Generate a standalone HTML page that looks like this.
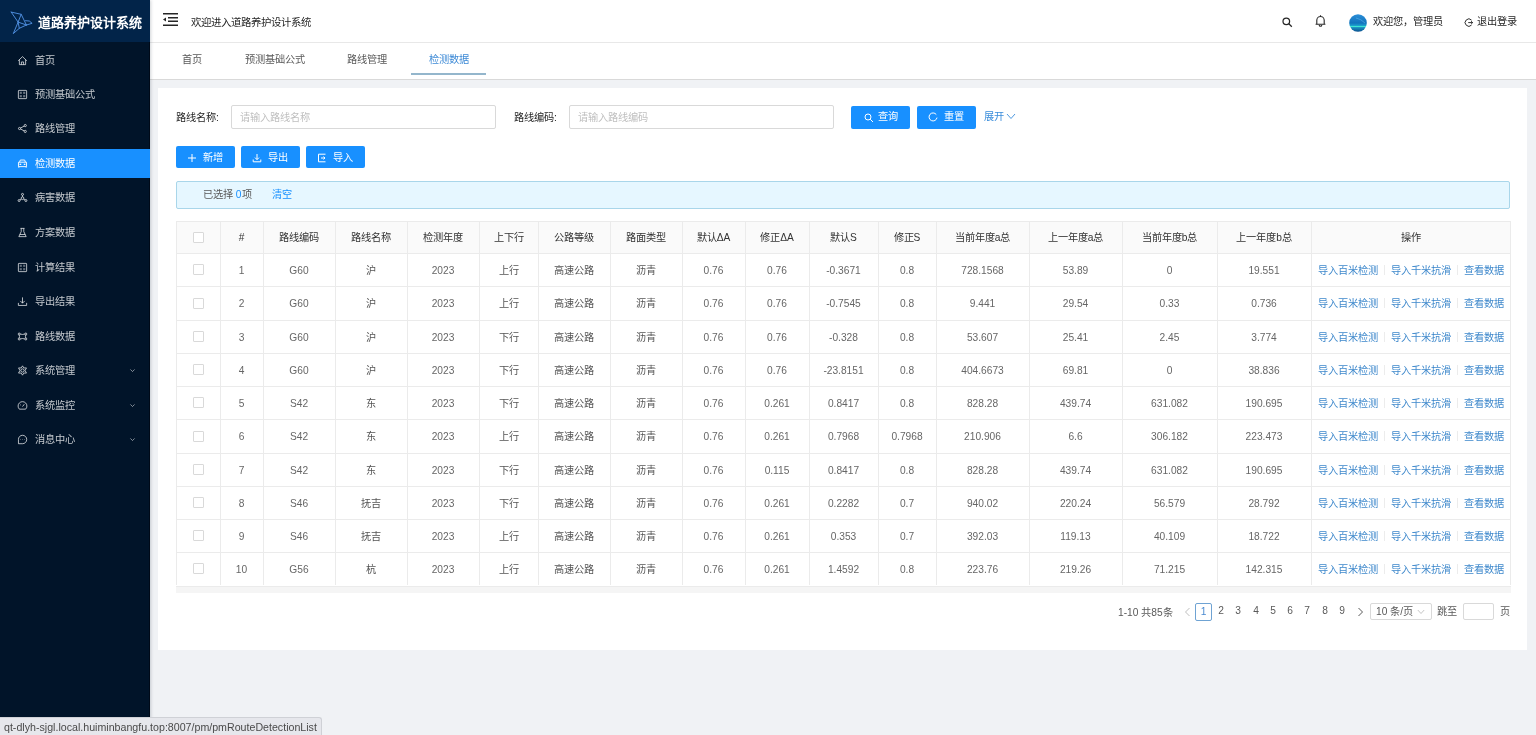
<!DOCTYPE html>
<html lang="zh-CN"><head><meta charset="utf-8">
<style>
*{box-sizing:border-box;margin:0;padding:0}
html,body{width:1536px;height:735px;overflow:hidden;will-change:transform;background:#f0f2f5;font-family:"Liberation Sans",sans-serif;font-size:10.2px;color:#595959}
.abs{position:absolute}
#side{position:absolute;left:0;top:0;width:150px;height:735px;background:#011429;box-shadow:1px 0 3px rgba(0,21,41,.18);border-right:1px solid #000a18;z-index:2}
#logo{position:absolute;left:0;top:0;width:150px;height:42px;background:#022449}
#logo .t{position:absolute;left:38px;top:12px;font-size:13px;font-weight:bold;color:#fff;line-height:22px;white-space:nowrap;letter-spacing:0}
.mi{position:absolute;left:0;width:150px;height:29px;line-height:29px;color:rgba(255,255,255,.76);font-size:10.2px}
.mi span{position:absolute;left:34.6px;top:0}
.mi.active{background:#1890ff;color:#fff}
.mic{position:absolute;left:17px;top:9px;fill:none;stroke:currentColor;stroke-width:1}
.chev{position:absolute;left:129px;top:11px;fill:none;stroke:currentColor;stroke-width:1.2;opacity:.8}
#hdr{position:absolute;left:150px;top:0;width:1386px;height:43px;background:#fff;border-bottom:1px solid #e8e8e8}
#tabs{position:absolute;left:150px;top:43px;width:1386px;height:37px;background:#fff;border-bottom:1px solid #d9d9d9}
.tab{position:absolute;top:1px;height:36px;line-height:32px;font-size:10.2px;color:#595959;white-space:nowrap}
#card{position:absolute;left:158px;top:88px;width:1369px;height:562px;background:#fff}
.lbl{position:absolute;color:#262626;font-size:10.2px;line-height:24px;padding-top:.5px;white-space:nowrap}
.inp{position:absolute;height:24px;border:1px solid #d9d9d9;border-radius:2px;background:#fff;color:#bfbfbf;line-height:22px;padding-top:1px;padding-left:8px;font-size:10.2px;white-space:nowrap}
.btn{position:absolute;background:#1890ff;color:#fff;border-radius:2px;font-size:10.2px;white-space:nowrap}
.btn svg{position:absolute;fill:none;stroke:#fff;stroke-width:1}
.btn span{position:absolute}
#alert{position:absolute;left:176px;top:181px;width:1334px;height:28px;background:#e6f7ff;border:1px solid #a9d6ea;border-radius:2px}
.thbg{position:absolute;background:#fafafa}
.hl{position:absolute;height:1px;background:#ebebeb}
.vl{position:absolute;width:1px;background:#ebebeb}
.sb{position:absolute;height:6px;background:#f5f5f5}
.cb{position:absolute;width:11px;height:11px;border:1px solid #d9d9d9;border-radius:1px;background:#fff}
.th{position:absolute;text-align:center;color:#333;padding-top:1px;font-size:10.2px;white-space:nowrap}
.td{position:absolute;text-align:center;color:#666;padding-top:1px;font-size:10.2px;white-space:nowrap}
.td.cj{color:#555}
.ops a{color:#3f89cc}
.ops i{display:inline-block;width:1px;height:10px;background:#ececec;margin:0 6px;vertical-align:-1px}
.pg{position:absolute;top:603px;height:17px;line-height:17px;font-size:10.2px;color:#595959;white-space:nowrap;text-align:center}
#status{position:absolute;z-index:5;left:0;top:717px;width:322px;height:18px;background:#e6e7ec;border:1px solid #cfd1d6;border-left:none;border-bottom:none;border-top-right-radius:3px;color:#4a4a4a;font-size:10.65px;line-height:18px;padding-left:4px;white-space:nowrap}
</style></head><body>
<div id="side">
  <div id="logo">
    <svg class="abs" style="left:10px;top:10px" width="24" height="25" viewBox="0 0 24 25" fill="none" stroke="#4f8fe0" stroke-width="0.95" stroke-linejoin="round" stroke-linecap="round">
      <path d="M1.2 2.1L11.2 4.3 16.4 15 M1.2 2.1L8.1 12.1 11.2 4.3 M8.1 12.1L16.4 15 M15.5 10.7L19.3 11 22.1 13.3 16.4 15 M8.1 12.1L3.3 23.6 9.3 18.3 16.4 15 M8.1 12.1L9.3 18.3"/>
    </svg>
    <div class="t">道路养护设计系统</div>
  </div>
  <div class="mi" style="top:45.5px"><svg class="mic" viewBox="0 0 12 12" width="11" height="11"><path d="M1.3 6.3L6 1.8 10.7 6.3M2.6 5.2V10.5H9.4V5.2M4.8 10.5V7.6H7.2V10.5" /></svg><span>首页</span></div>
<div class="mi" style="top:79.5px"><svg class="mic" viewBox="0 0 12 12" width="11" height="11"><rect x="1.5" y="1.5" width="9" height="9" rx=".6"/><rect x="3" y="3" width="2.3" height="2.3" fill="currentColor" stroke="none" opacity=".55"/><rect x="6.7" y="3" width="2.3" height="2.3" fill="currentColor" stroke="none" opacity=".55"/><rect x="3" y="6.7" width="2.3" height="2.3" fill="currentColor" stroke="none" opacity=".55"/><rect x="6.7" y="6.7" width="2.3" height="2.3" fill="currentColor" stroke="none" opacity=".55"/></svg><span>预测基础公式</span></div>
<div class="mi" style="top:113.5px"><svg class="mic" viewBox="0 0 12 12" width="11" height="11"><circle cx="9" cy="2.8" r="1.2"/><circle cx="2.8" cy="6" r="1.2"/><circle cx="9" cy="9.2" r="1.2"/><path d="M3.9 5.4L7.9 3.4M3.9 6.6L7.9 8.6"/></svg><span>路线管理</span></div>
<div class="mi active" style="top:148.5px"><svg class="mic" viewBox="0 0 12 12" width="11" height="11"><path d="M2.8 4.6L3.6 2.2H8.4L9.2 4.6M1.6 4.6H10.4V9.4H1.6ZM2 9.4V10.6M10 9.4V10.6"/><rect x="2.8" y="6.2" width="1.8" height="1.4" fill="currentColor" stroke="none"/><rect x="7.4" y="6.2" width="1.8" height="1.4" fill="currentColor" stroke="none"/></svg><span>检测数据</span></div>
<div class="mi" style="top:182.5px"><svg class="mic" viewBox="0 0 12 12" width="11" height="11"><circle cx="6" cy="2.6" r="1.1"/><circle cx="6" cy="6.8" r="1.5"/><circle cx="2.3" cy="9.3" r="1.1"/><circle cx="9.7" cy="9.3" r="1.1"/><path d="M6 3.7V5.3M4.8 7.7L3.2 8.7M7.2 7.7L8.8 8.7"/></svg><span>病害数据</span></div>
<div class="mi" style="top:217.5px"><svg class="mic" viewBox="0 0 12 12" width="11" height="11"><path d="M3.8 1.5H8.2M4.6 1.5V5L2 10.5H10L7.4 5V1.5M3.1 8.2H8.9"/></svg><span>方案数据</span></div>
<div class="mi" style="top:252.5px"><svg class="mic" viewBox="0 0 12 12" width="11" height="11"><rect x="1.5" y="1.5" width="9" height="9" rx=".6"/><rect x="3" y="3" width="2.3" height="2.3" fill="currentColor" stroke="none" opacity=".5"/><rect x="6.7" y="3" width="2.3" height="2.3" fill="currentColor" stroke="none" opacity=".5"/><rect x="3" y="6.7" width="2.3" height="2.3" fill="currentColor" stroke="none" opacity=".5"/><rect x="6.7" y="6.7" width="2.3" height="2.3" fill="currentColor" stroke="none" opacity=".5"/></svg><span>计算结果</span></div>
<div class="mi" style="top:286.5px"><svg class="mic" viewBox="0 0 12 12" width="11" height="11"><path d="M6 1.5V7.8M3.6 5.4L6 7.8 8.4 5.4M1.5 7.5V10.3H10.5V7.5"/></svg><span>导出结果</span></div>
<div class="mi" style="top:321.5px"><svg class="mic" viewBox="0 0 12 12" width="11" height="11"><circle cx="2.4" cy="3.3" r="1.1"/><circle cx="9.6" cy="3.3" r="1.1"/><circle cx="2.4" cy="8.7" r="1.1"/><circle cx="9.6" cy="8.7" r="1.1"/><path d="M3.5 3.3Q6 4.3 8.5 3.3M3.5 8.7Q6 7.7 8.5 8.7M2.4 4.4Q3.2 6 2.4 7.6M9.6 4.4Q8.8 6 9.6 7.6"/></svg><span>路线数据</span></div>
<div class="mi" style="top:355.5px"><svg class="mic" viewBox="0 0 12 12" width="11" height="11"><circle cx="6" cy="6" r="1.8"/><path d="M6 0.9L7.4 3.2 10.3 3.2 8.8 6 10.3 8.8 7.4 8.8 6 11.1 4.6 8.8 1.7 8.8 3.2 6 1.7 3.2 4.6 3.2Z" stroke-linejoin="round"/></svg><span>系统管理</span><svg class="chev" viewBox="0 0 10 10" width="7" height="7"><path d="M2 3.5L5 6.5 8 3.5"/></svg></div>
<div class="mi" style="top:390.5px"><svg class="mic" viewBox="0 0 12 12" width="11" height="11"><path d="M2.6 10H9.4A4.8 4.8 0 1 0 2.6 10Z"/><path d="M6 7.2L8 4.6M3.6 5.2L4.4 5.8"/></svg><span>系统监控</span><svg class="chev" viewBox="0 0 10 10" width="7" height="7"><path d="M2 3.5L5 6.5 8 3.5"/></svg></div>
<div class="mi" style="top:424.5px"><svg class="mic" viewBox="0 0 12 12" width="11" height="11"><path d="M6 1.4A4.6 4.6 0 1 1 6 10.6H1.6V6A4.4 4.4 0 0 1 6 1.4Z"/><path d="M3.9 6.1H4.3M5.8 6.1H6.2M7.7 6.1H8.1" stroke-width="1.1"/></svg><span>消息中心</span><svg class="chev" viewBox="0 0 10 10" width="7" height="7"><path d="M2 3.5L5 6.5 8 3.5"/></svg></div>
</div>
<div id="hdr">
  <svg class="abs" style="left:13px;top:13px" width="16" height="13" viewBox="0 0 16 13"><path d="M0 0.75H15M5 4.75H15M5 8.25H15M0 12.25H15" stroke="#262626" stroke-width="1.5"/><path d="M0 6.5L3 4.5V8.5Z" fill="#262626"/></svg>
  <div class="abs" style="left:41px;top:15.5px;line-height:14px;font-size:10.4px;color:#262626;white-space:nowrap">欢迎进入道路养护设计系统</div>
  <svg class="abs" style="left:1131.5px;top:16.5px" width="11" height="11" viewBox="0 0 11 11" fill="none" stroke="#262626" stroke-width="1.25"><circle cx="4.3" cy="4.3" r="3.3"/><path d="M6.8 6.8L9.8 9.8"/></svg>
  <svg class="abs" style="left:1165px;top:14px" width="11" height="13" viewBox="0 0 11 13" fill="none" stroke="#262626" stroke-width="1.1"><path d="M1.8 10V6.2A3.7 3.7 0 0 1 9.2 6.2V10M0.6 10.2H10.4M5.5 1.2V2.4M4.2 11A1.3 1.3 0 0 0 6.8 11"/></svg>
  <svg class="abs" style="left:1198.5px;top:14px" width="18" height="18" viewBox="0 0 18 18"><defs><linearGradient id="av" x1="0" y1="0" x2="0" y2="1"><stop offset="0" stop-color="#2c8fd8"/><stop offset=".5" stop-color="#1273bd"/><stop offset=".64" stop-color="#1a9ccc"/><stop offset=".7" stop-color="#3ee6d2"/><stop offset=".76" stop-color="#1a8fc0"/><stop offset="1" stop-color="#0b4f8e"/></linearGradient></defs><circle cx="9" cy="9" r="8.8" fill="url(#av)"/><path d="M7 4Q12 5 16 9" stroke="#5ab8ee" stroke-width=".8" fill="none" opacity=".7"/></svg>
  <div class="abs" style="left:1223px;top:15px;line-height:14px;font-size:10.2px;color:#262626;white-space:nowrap">欢迎您，管理员</div>
  <svg class="abs" style="left:1313.8px;top:17.6px" width="9.2" height="9.2" viewBox="0 0 10 10" fill="none" stroke="#262626" stroke-width="1.05"><path d="M8.2 2.3A4 4 0 1 0 8.2 7.7M4.6 5H9.4M7.8 3.5L9.4 5 7.8 6.5"/></svg>
  <div class="abs" style="left:1327px;top:15px;line-height:14px;font-size:10.2px;color:#262626;white-space:nowrap">退出登录</div>
</div>
<div id="tabs">
  <div class="tab" style="left:32px">首页</div>
  <div class="tab" style="left:94.5px">预测基础公式</div>
  <div class="tab" style="left:196.5px">路线管理</div>
  <div class="tab" style="left:278.7px;color:#3d8ad6">检测数据</div>
  <div class="abs" style="left:261px;top:29.5px;width:75px;height:2px;background:#94b6cc"></div>
</div>
<div id="card"></div>
<div class="lbl" style="left:176px;top:105px">路线名称:</div>
<div class="inp" style="left:231px;top:105px;width:265px">请输入路线名称</div>
<div class="lbl" style="left:514px;top:105px">路线编码:</div>
<div class="inp" style="left:569px;top:105px;width:265px">请输入路线编码</div>
<div class="btn" style="left:851px;top:105.5px;width:59px;height:23px"><svg style="left:13px;top:7px" width="10" height="10" viewBox="0 0 10 10"><circle cx="4" cy="4" r="3"/><path d="M6.2 6.2L9 9"/></svg><span style="left:27px;top:4.5px;line-height:14px">查询</span></div>
<div class="btn" style="left:917px;top:105.5px;width:59px;height:23px"><svg style="left:11px;top:6.5px" width="10" height="10" viewBox="0 0 10 10"><path d="M8.3 2.6A4 4 0 1 0 9 5.6"/></svg><span style="left:27px;top:4.5px;line-height:14px">重置</span></div>
<div class="abs" style="left:984px;top:110px;line-height:14px;color:#3a8ddb;white-space:nowrap">展开<svg style="margin-left:2px;vertical-align:0px" width="10" height="7" viewBox="0 0 10 7" fill="none" stroke="#3a8ddb" stroke-width="0.9"><path d="M1 1L5 5.5 9 1"/></svg></div>
<div class="btn" style="left:176px;top:146.2px;width:59px;height:22.3px"><svg style="left:11px;top:6.5px" width="10" height="10" viewBox="0 0 10 10"><path d="M5 1V9M1 5H9"/></svg><span style="left:27px;top:5.2px;line-height:14px">新增</span></div>
<div class="btn" style="left:241px;top:146.2px;width:59px;height:22.3px"><svg style="left:11px;top:6.5px" width="10" height="10" viewBox="0 0 10 10"><path d="M5 1V6.5M3 4.6L5 6.6 7 4.6M1.2 6.5V8.8H8.8V6.5"/></svg><span style="left:27px;top:5.2px;line-height:14px">导出</span></div>
<div class="btn" style="left:306px;top:146.2px;width:59px;height:22.3px"><svg style="left:11px;top:6.5px" width="10" height="10" viewBox="0 0 10 10"><path d="M8.5 1.2H1.5V8.8H8.5M4 5H8M6.5 3.6L8 5 6.5 6.4"/></svg><span style="left:27px;top:5.2px;line-height:14px">导入</span></div>
<div id="alert"><div class="abs" style="left:26px;top:6px;line-height:14px;color:#595959;white-space:nowrap">已选择 <span style="color:#1890ff">0</span>项</div><div class="abs" style="left:95px;top:6px;line-height:14px;color:#1890ff;white-space:nowrap">清空</div></div>
<div class="thbg" style="left:176px;top:221.4px;width:1334px;height:31.8px"></div>
<div class="hl" style="left:176px;top:221.40px;width:1335px"></div>
<div class="hl" style="left:176px;top:253.20px;width:1335px"></div>
<div class="hl" style="left:176px;top:286.43px;width:1335px"></div>
<div class="hl" style="left:176px;top:319.66px;width:1335px"></div>
<div class="hl" style="left:176px;top:352.89px;width:1335px"></div>
<div class="hl" style="left:176px;top:386.12px;width:1335px"></div>
<div class="hl" style="left:176px;top:419.35px;width:1335px"></div>
<div class="hl" style="left:176px;top:452.58px;width:1335px"></div>
<div class="hl" style="left:176px;top:485.81px;width:1335px"></div>
<div class="hl" style="left:176px;top:519.04px;width:1335px"></div>
<div class="hl" style="left:176px;top:552.27px;width:1335px"></div>
<div class="hl" style="left:176px;top:585.50px;width:1335px"></div>
<div class="vl" style="left:176px;top:221.4px;height:364.10px"></div>
<div class="vl" style="left:220px;top:221.4px;height:364.10px"></div>
<div class="vl" style="left:263px;top:221.4px;height:364.10px"></div>
<div class="vl" style="left:335px;top:221.4px;height:364.10px"></div>
<div class="vl" style="left:407px;top:221.4px;height:364.10px"></div>
<div class="vl" style="left:479px;top:221.4px;height:364.10px"></div>
<div class="vl" style="left:538px;top:221.4px;height:364.10px"></div>
<div class="vl" style="left:610px;top:221.4px;height:364.10px"></div>
<div class="vl" style="left:682px;top:221.4px;height:364.10px"></div>
<div class="vl" style="left:745px;top:221.4px;height:364.10px"></div>
<div class="vl" style="left:809px;top:221.4px;height:364.10px"></div>
<div class="vl" style="left:878px;top:221.4px;height:364.10px"></div>
<div class="vl" style="left:936px;top:221.4px;height:364.10px"></div>
<div class="vl" style="left:1029px;top:221.4px;height:364.10px"></div>
<div class="vl" style="left:1122px;top:221.4px;height:364.10px"></div>
<div class="vl" style="left:1217px;top:221.4px;height:364.10px"></div>
<div class="vl" style="left:1311px;top:221.4px;height:364.10px"></div>
<div class="vl" style="left:1510px;top:221.4px;height:364.10px"></div>
<div class="sb" style="left:176px;top:586.50px;width:1335px"></div>
<div class="cb" style="left:192.5px;top:231.8px"></div>
<div class="th" style="left:220px;width:43px;top:221.4px;height:31.8px;line-height:31.8px">#</div>
<div class="th" style="left:263px;width:72px;top:221.4px;height:31.8px;line-height:31.8px">路线编码</div>
<div class="th" style="left:335px;width:72px;top:221.4px;height:31.8px;line-height:31.8px">路线名称</div>
<div class="th" style="left:407px;width:72px;top:221.4px;height:31.8px;line-height:31.8px">检测年度</div>
<div class="th" style="left:479px;width:59px;top:221.4px;height:31.8px;line-height:31.8px">上下行</div>
<div class="th" style="left:538px;width:72px;top:221.4px;height:31.8px;line-height:31.8px">公路等级</div>
<div class="th" style="left:610px;width:72px;top:221.4px;height:31.8px;line-height:31.8px">路面类型</div>
<div class="th" style="left:682px;width:63px;top:221.4px;height:31.8px;line-height:31.8px">默认ΔA</div>
<div class="th" style="left:745px;width:64px;top:221.4px;height:31.8px;line-height:31.8px">修正ΔA</div>
<div class="th" style="left:809px;width:69px;top:221.4px;height:31.8px;line-height:31.8px">默认S</div>
<div class="th" style="left:878px;width:58px;top:221.4px;height:31.8px;line-height:31.8px">修正S</div>
<div class="th" style="left:936px;width:93px;top:221.4px;height:31.8px;line-height:31.8px">当前年度a总</div>
<div class="th" style="left:1029px;width:93px;top:221.4px;height:31.8px;line-height:31.8px">上一年度a总</div>
<div class="th" style="left:1122px;width:95px;top:221.4px;height:31.8px;line-height:31.8px">当前年度b总</div>
<div class="th" style="left:1217px;width:94px;top:221.4px;height:31.8px;line-height:31.8px">上一年度b总</div>
<div class="th" style="left:1311px;width:199px;top:221.4px;height:31.8px;line-height:31.8px">操作</div>
<div class="cb" style="left:192.5px;top:264.3px"></div>
<div class="td" style="left:220px;width:43px;top:253.20px;height:33.23px;line-height:33.23px">1</div>
<div class="td" style="left:263px;width:72px;top:253.20px;height:33.23px;line-height:33.23px">G60</div>
<div class="td cj" style="left:335px;width:72px;top:253.20px;height:33.23px;line-height:33.23px">沪</div>
<div class="td" style="left:407px;width:72px;top:253.20px;height:33.23px;line-height:33.23px">2023</div>
<div class="td cj" style="left:479px;width:59px;top:253.20px;height:33.23px;line-height:33.23px">上行</div>
<div class="td cj" style="left:538px;width:72px;top:253.20px;height:33.23px;line-height:33.23px">高速公路</div>
<div class="td cj" style="left:610px;width:72px;top:253.20px;height:33.23px;line-height:33.23px">沥青</div>
<div class="td" style="left:682px;width:63px;top:253.20px;height:33.23px;line-height:33.23px">0.76</div>
<div class="td" style="left:745px;width:64px;top:253.20px;height:33.23px;line-height:33.23px">0.76</div>
<div class="td" style="left:809px;width:69px;top:253.20px;height:33.23px;line-height:33.23px">-0.3671</div>
<div class="td" style="left:878px;width:58px;top:253.20px;height:33.23px;line-height:33.23px">0.8</div>
<div class="td" style="left:936px;width:93px;top:253.20px;height:33.23px;line-height:33.23px">728.1568</div>
<div class="td" style="left:1029px;width:93px;top:253.20px;height:33.23px;line-height:33.23px">53.89</div>
<div class="td" style="left:1122px;width:95px;top:253.20px;height:33.23px;line-height:33.23px">0</div>
<div class="td" style="left:1217px;width:94px;top:253.20px;height:33.23px;line-height:33.23px">19.551</div>
<div class="td ops" style="left:1311px;width:199px;top:253.20px;height:33.23px;line-height:33.23px"><a>导入百米检测</a><i></i><a>导入千米抗滑</a><i></i><a>查看数据</a></div>
<div class="cb" style="left:192.5px;top:297.5px"></div>
<div class="td" style="left:220px;width:43px;top:286.43px;height:33.23px;line-height:33.23px">2</div>
<div class="td" style="left:263px;width:72px;top:286.43px;height:33.23px;line-height:33.23px">G60</div>
<div class="td cj" style="left:335px;width:72px;top:286.43px;height:33.23px;line-height:33.23px">沪</div>
<div class="td" style="left:407px;width:72px;top:286.43px;height:33.23px;line-height:33.23px">2023</div>
<div class="td cj" style="left:479px;width:59px;top:286.43px;height:33.23px;line-height:33.23px">上行</div>
<div class="td cj" style="left:538px;width:72px;top:286.43px;height:33.23px;line-height:33.23px">高速公路</div>
<div class="td cj" style="left:610px;width:72px;top:286.43px;height:33.23px;line-height:33.23px">沥青</div>
<div class="td" style="left:682px;width:63px;top:286.43px;height:33.23px;line-height:33.23px">0.76</div>
<div class="td" style="left:745px;width:64px;top:286.43px;height:33.23px;line-height:33.23px">0.76</div>
<div class="td" style="left:809px;width:69px;top:286.43px;height:33.23px;line-height:33.23px">-0.7545</div>
<div class="td" style="left:878px;width:58px;top:286.43px;height:33.23px;line-height:33.23px">0.8</div>
<div class="td" style="left:936px;width:93px;top:286.43px;height:33.23px;line-height:33.23px">9.441</div>
<div class="td" style="left:1029px;width:93px;top:286.43px;height:33.23px;line-height:33.23px">29.54</div>
<div class="td" style="left:1122px;width:95px;top:286.43px;height:33.23px;line-height:33.23px">0.33</div>
<div class="td" style="left:1217px;width:94px;top:286.43px;height:33.23px;line-height:33.23px">0.736</div>
<div class="td ops" style="left:1311px;width:199px;top:286.43px;height:33.23px;line-height:33.23px"><a>导入百米检测</a><i></i><a>导入千米抗滑</a><i></i><a>查看数据</a></div>
<div class="cb" style="left:192.5px;top:330.8px"></div>
<div class="td" style="left:220px;width:43px;top:319.66px;height:33.23px;line-height:33.23px">3</div>
<div class="td" style="left:263px;width:72px;top:319.66px;height:33.23px;line-height:33.23px">G60</div>
<div class="td cj" style="left:335px;width:72px;top:319.66px;height:33.23px;line-height:33.23px">沪</div>
<div class="td" style="left:407px;width:72px;top:319.66px;height:33.23px;line-height:33.23px">2023</div>
<div class="td cj" style="left:479px;width:59px;top:319.66px;height:33.23px;line-height:33.23px">下行</div>
<div class="td cj" style="left:538px;width:72px;top:319.66px;height:33.23px;line-height:33.23px">高速公路</div>
<div class="td cj" style="left:610px;width:72px;top:319.66px;height:33.23px;line-height:33.23px">沥青</div>
<div class="td" style="left:682px;width:63px;top:319.66px;height:33.23px;line-height:33.23px">0.76</div>
<div class="td" style="left:745px;width:64px;top:319.66px;height:33.23px;line-height:33.23px">0.76</div>
<div class="td" style="left:809px;width:69px;top:319.66px;height:33.23px;line-height:33.23px">-0.328</div>
<div class="td" style="left:878px;width:58px;top:319.66px;height:33.23px;line-height:33.23px">0.8</div>
<div class="td" style="left:936px;width:93px;top:319.66px;height:33.23px;line-height:33.23px">53.607</div>
<div class="td" style="left:1029px;width:93px;top:319.66px;height:33.23px;line-height:33.23px">25.41</div>
<div class="td" style="left:1122px;width:95px;top:319.66px;height:33.23px;line-height:33.23px">2.45</div>
<div class="td" style="left:1217px;width:94px;top:319.66px;height:33.23px;line-height:33.23px">3.774</div>
<div class="td ops" style="left:1311px;width:199px;top:319.66px;height:33.23px;line-height:33.23px"><a>导入百米检测</a><i></i><a>导入千米抗滑</a><i></i><a>查看数据</a></div>
<div class="cb" style="left:192.5px;top:364.0px"></div>
<div class="td" style="left:220px;width:43px;top:352.89px;height:33.23px;line-height:33.23px">4</div>
<div class="td" style="left:263px;width:72px;top:352.89px;height:33.23px;line-height:33.23px">G60</div>
<div class="td cj" style="left:335px;width:72px;top:352.89px;height:33.23px;line-height:33.23px">沪</div>
<div class="td" style="left:407px;width:72px;top:352.89px;height:33.23px;line-height:33.23px">2023</div>
<div class="td cj" style="left:479px;width:59px;top:352.89px;height:33.23px;line-height:33.23px">下行</div>
<div class="td cj" style="left:538px;width:72px;top:352.89px;height:33.23px;line-height:33.23px">高速公路</div>
<div class="td cj" style="left:610px;width:72px;top:352.89px;height:33.23px;line-height:33.23px">沥青</div>
<div class="td" style="left:682px;width:63px;top:352.89px;height:33.23px;line-height:33.23px">0.76</div>
<div class="td" style="left:745px;width:64px;top:352.89px;height:33.23px;line-height:33.23px">0.76</div>
<div class="td" style="left:809px;width:69px;top:352.89px;height:33.23px;line-height:33.23px">-23.8151</div>
<div class="td" style="left:878px;width:58px;top:352.89px;height:33.23px;line-height:33.23px">0.8</div>
<div class="td" style="left:936px;width:93px;top:352.89px;height:33.23px;line-height:33.23px">404.6673</div>
<div class="td" style="left:1029px;width:93px;top:352.89px;height:33.23px;line-height:33.23px">69.81</div>
<div class="td" style="left:1122px;width:95px;top:352.89px;height:33.23px;line-height:33.23px">0</div>
<div class="td" style="left:1217px;width:94px;top:352.89px;height:33.23px;line-height:33.23px">38.836</div>
<div class="td ops" style="left:1311px;width:199px;top:352.89px;height:33.23px;line-height:33.23px"><a>导入百米检测</a><i></i><a>导入千米抗滑</a><i></i><a>查看数据</a></div>
<div class="cb" style="left:192.5px;top:397.2px"></div>
<div class="td" style="left:220px;width:43px;top:386.12px;height:33.23px;line-height:33.23px">5</div>
<div class="td" style="left:263px;width:72px;top:386.12px;height:33.23px;line-height:33.23px">S42</div>
<div class="td cj" style="left:335px;width:72px;top:386.12px;height:33.23px;line-height:33.23px">东</div>
<div class="td" style="left:407px;width:72px;top:386.12px;height:33.23px;line-height:33.23px">2023</div>
<div class="td cj" style="left:479px;width:59px;top:386.12px;height:33.23px;line-height:33.23px">下行</div>
<div class="td cj" style="left:538px;width:72px;top:386.12px;height:33.23px;line-height:33.23px">高速公路</div>
<div class="td cj" style="left:610px;width:72px;top:386.12px;height:33.23px;line-height:33.23px">沥青</div>
<div class="td" style="left:682px;width:63px;top:386.12px;height:33.23px;line-height:33.23px">0.76</div>
<div class="td" style="left:745px;width:64px;top:386.12px;height:33.23px;line-height:33.23px">0.261</div>
<div class="td" style="left:809px;width:69px;top:386.12px;height:33.23px;line-height:33.23px">0.8417</div>
<div class="td" style="left:878px;width:58px;top:386.12px;height:33.23px;line-height:33.23px">0.8</div>
<div class="td" style="left:936px;width:93px;top:386.12px;height:33.23px;line-height:33.23px">828.28</div>
<div class="td" style="left:1029px;width:93px;top:386.12px;height:33.23px;line-height:33.23px">439.74</div>
<div class="td" style="left:1122px;width:95px;top:386.12px;height:33.23px;line-height:33.23px">631.082</div>
<div class="td" style="left:1217px;width:94px;top:386.12px;height:33.23px;line-height:33.23px">190.695</div>
<div class="td ops" style="left:1311px;width:199px;top:386.12px;height:33.23px;line-height:33.23px"><a>导入百米检测</a><i></i><a>导入千米抗滑</a><i></i><a>查看数据</a></div>
<div class="cb" style="left:192.5px;top:430.5px"></div>
<div class="td" style="left:220px;width:43px;top:419.35px;height:33.23px;line-height:33.23px">6</div>
<div class="td" style="left:263px;width:72px;top:419.35px;height:33.23px;line-height:33.23px">S42</div>
<div class="td cj" style="left:335px;width:72px;top:419.35px;height:33.23px;line-height:33.23px">东</div>
<div class="td" style="left:407px;width:72px;top:419.35px;height:33.23px;line-height:33.23px">2023</div>
<div class="td cj" style="left:479px;width:59px;top:419.35px;height:33.23px;line-height:33.23px">上行</div>
<div class="td cj" style="left:538px;width:72px;top:419.35px;height:33.23px;line-height:33.23px">高速公路</div>
<div class="td cj" style="left:610px;width:72px;top:419.35px;height:33.23px;line-height:33.23px">沥青</div>
<div class="td" style="left:682px;width:63px;top:419.35px;height:33.23px;line-height:33.23px">0.76</div>
<div class="td" style="left:745px;width:64px;top:419.35px;height:33.23px;line-height:33.23px">0.261</div>
<div class="td" style="left:809px;width:69px;top:419.35px;height:33.23px;line-height:33.23px">0.7968</div>
<div class="td" style="left:878px;width:58px;top:419.35px;height:33.23px;line-height:33.23px">0.7968</div>
<div class="td" style="left:936px;width:93px;top:419.35px;height:33.23px;line-height:33.23px">210.906</div>
<div class="td" style="left:1029px;width:93px;top:419.35px;height:33.23px;line-height:33.23px">6.6</div>
<div class="td" style="left:1122px;width:95px;top:419.35px;height:33.23px;line-height:33.23px">306.182</div>
<div class="td" style="left:1217px;width:94px;top:419.35px;height:33.23px;line-height:33.23px">223.473</div>
<div class="td ops" style="left:1311px;width:199px;top:419.35px;height:33.23px;line-height:33.23px"><a>导入百米检测</a><i></i><a>导入千米抗滑</a><i></i><a>查看数据</a></div>
<div class="cb" style="left:192.5px;top:463.7px"></div>
<div class="td" style="left:220px;width:43px;top:452.58px;height:33.23px;line-height:33.23px">7</div>
<div class="td" style="left:263px;width:72px;top:452.58px;height:33.23px;line-height:33.23px">S42</div>
<div class="td cj" style="left:335px;width:72px;top:452.58px;height:33.23px;line-height:33.23px">东</div>
<div class="td" style="left:407px;width:72px;top:452.58px;height:33.23px;line-height:33.23px">2023</div>
<div class="td cj" style="left:479px;width:59px;top:452.58px;height:33.23px;line-height:33.23px">下行</div>
<div class="td cj" style="left:538px;width:72px;top:452.58px;height:33.23px;line-height:33.23px">高速公路</div>
<div class="td cj" style="left:610px;width:72px;top:452.58px;height:33.23px;line-height:33.23px">沥青</div>
<div class="td" style="left:682px;width:63px;top:452.58px;height:33.23px;line-height:33.23px">0.76</div>
<div class="td" style="left:745px;width:64px;top:452.58px;height:33.23px;line-height:33.23px">0.115</div>
<div class="td" style="left:809px;width:69px;top:452.58px;height:33.23px;line-height:33.23px">0.8417</div>
<div class="td" style="left:878px;width:58px;top:452.58px;height:33.23px;line-height:33.23px">0.8</div>
<div class="td" style="left:936px;width:93px;top:452.58px;height:33.23px;line-height:33.23px">828.28</div>
<div class="td" style="left:1029px;width:93px;top:452.58px;height:33.23px;line-height:33.23px">439.74</div>
<div class="td" style="left:1122px;width:95px;top:452.58px;height:33.23px;line-height:33.23px">631.082</div>
<div class="td" style="left:1217px;width:94px;top:452.58px;height:33.23px;line-height:33.23px">190.695</div>
<div class="td ops" style="left:1311px;width:199px;top:452.58px;height:33.23px;line-height:33.23px"><a>导入百米检测</a><i></i><a>导入千米抗滑</a><i></i><a>查看数据</a></div>
<div class="cb" style="left:192.5px;top:496.9px"></div>
<div class="td" style="left:220px;width:43px;top:485.81px;height:33.23px;line-height:33.23px">8</div>
<div class="td" style="left:263px;width:72px;top:485.81px;height:33.23px;line-height:33.23px">S46</div>
<div class="td cj" style="left:335px;width:72px;top:485.81px;height:33.23px;line-height:33.23px">抚吉</div>
<div class="td" style="left:407px;width:72px;top:485.81px;height:33.23px;line-height:33.23px">2023</div>
<div class="td cj" style="left:479px;width:59px;top:485.81px;height:33.23px;line-height:33.23px">下行</div>
<div class="td cj" style="left:538px;width:72px;top:485.81px;height:33.23px;line-height:33.23px">高速公路</div>
<div class="td cj" style="left:610px;width:72px;top:485.81px;height:33.23px;line-height:33.23px">沥青</div>
<div class="td" style="left:682px;width:63px;top:485.81px;height:33.23px;line-height:33.23px">0.76</div>
<div class="td" style="left:745px;width:64px;top:485.81px;height:33.23px;line-height:33.23px">0.261</div>
<div class="td" style="left:809px;width:69px;top:485.81px;height:33.23px;line-height:33.23px">0.2282</div>
<div class="td" style="left:878px;width:58px;top:485.81px;height:33.23px;line-height:33.23px">0.7</div>
<div class="td" style="left:936px;width:93px;top:485.81px;height:33.23px;line-height:33.23px">940.02</div>
<div class="td" style="left:1029px;width:93px;top:485.81px;height:33.23px;line-height:33.23px">220.24</div>
<div class="td" style="left:1122px;width:95px;top:485.81px;height:33.23px;line-height:33.23px">56.579</div>
<div class="td" style="left:1217px;width:94px;top:485.81px;height:33.23px;line-height:33.23px">28.792</div>
<div class="td ops" style="left:1311px;width:199px;top:485.81px;height:33.23px;line-height:33.23px"><a>导入百米检测</a><i></i><a>导入千米抗滑</a><i></i><a>查看数据</a></div>
<div class="cb" style="left:192.5px;top:530.2px"></div>
<div class="td" style="left:220px;width:43px;top:519.04px;height:33.23px;line-height:33.23px">9</div>
<div class="td" style="left:263px;width:72px;top:519.04px;height:33.23px;line-height:33.23px">S46</div>
<div class="td cj" style="left:335px;width:72px;top:519.04px;height:33.23px;line-height:33.23px">抚吉</div>
<div class="td" style="left:407px;width:72px;top:519.04px;height:33.23px;line-height:33.23px">2023</div>
<div class="td cj" style="left:479px;width:59px;top:519.04px;height:33.23px;line-height:33.23px">上行</div>
<div class="td cj" style="left:538px;width:72px;top:519.04px;height:33.23px;line-height:33.23px">高速公路</div>
<div class="td cj" style="left:610px;width:72px;top:519.04px;height:33.23px;line-height:33.23px">沥青</div>
<div class="td" style="left:682px;width:63px;top:519.04px;height:33.23px;line-height:33.23px">0.76</div>
<div class="td" style="left:745px;width:64px;top:519.04px;height:33.23px;line-height:33.23px">0.261</div>
<div class="td" style="left:809px;width:69px;top:519.04px;height:33.23px;line-height:33.23px">0.353</div>
<div class="td" style="left:878px;width:58px;top:519.04px;height:33.23px;line-height:33.23px">0.7</div>
<div class="td" style="left:936px;width:93px;top:519.04px;height:33.23px;line-height:33.23px">392.03</div>
<div class="td" style="left:1029px;width:93px;top:519.04px;height:33.23px;line-height:33.23px">119.13</div>
<div class="td" style="left:1122px;width:95px;top:519.04px;height:33.23px;line-height:33.23px">40.109</div>
<div class="td" style="left:1217px;width:94px;top:519.04px;height:33.23px;line-height:33.23px">18.722</div>
<div class="td ops" style="left:1311px;width:199px;top:519.04px;height:33.23px;line-height:33.23px"><a>导入百米检测</a><i></i><a>导入千米抗滑</a><i></i><a>查看数据</a></div>
<div class="cb" style="left:192.5px;top:563.4px"></div>
<div class="td" style="left:220px;width:43px;top:552.27px;height:33.23px;line-height:33.23px">10</div>
<div class="td" style="left:263px;width:72px;top:552.27px;height:33.23px;line-height:33.23px">G56</div>
<div class="td cj" style="left:335px;width:72px;top:552.27px;height:33.23px;line-height:33.23px">杭</div>
<div class="td" style="left:407px;width:72px;top:552.27px;height:33.23px;line-height:33.23px">2023</div>
<div class="td cj" style="left:479px;width:59px;top:552.27px;height:33.23px;line-height:33.23px">上行</div>
<div class="td cj" style="left:538px;width:72px;top:552.27px;height:33.23px;line-height:33.23px">高速公路</div>
<div class="td cj" style="left:610px;width:72px;top:552.27px;height:33.23px;line-height:33.23px">沥青</div>
<div class="td" style="left:682px;width:63px;top:552.27px;height:33.23px;line-height:33.23px">0.76</div>
<div class="td" style="left:745px;width:64px;top:552.27px;height:33.23px;line-height:33.23px">0.261</div>
<div class="td" style="left:809px;width:69px;top:552.27px;height:33.23px;line-height:33.23px">1.4592</div>
<div class="td" style="left:878px;width:58px;top:552.27px;height:33.23px;line-height:33.23px">0.8</div>
<div class="td" style="left:936px;width:93px;top:552.27px;height:33.23px;line-height:33.23px">223.76</div>
<div class="td" style="left:1029px;width:93px;top:552.27px;height:33.23px;line-height:33.23px">219.26</div>
<div class="td" style="left:1122px;width:95px;top:552.27px;height:33.23px;line-height:33.23px">71.215</div>
<div class="td" style="left:1217px;width:94px;top:552.27px;height:33.23px;line-height:33.23px">142.315</div>
<div class="td ops" style="left:1311px;width:199px;top:552.27px;height:33.23px;line-height:33.23px"><a>导入百米检测</a><i></i><a>导入千米抗滑</a><i></i><a>查看数据</a></div>
<div class="pg" style="left:1118px;top:603.5px;text-align:left">1-10 共85条</div>
<svg class="abs" style="left:1183.5px;top:607px" width="7" height="10" viewBox="0 0 7 10" fill="none" stroke="#bfbfbf" stroke-width="1"><path d="M5.5 1L1.5 5 5.5 9"/></svg>
<div class="pg" style="left:1195.2px;top:603.2px;width:16.8px;height:17.4px;border:1px solid #6fa3d3;border-radius:2px;color:#4a8ad0;line-height:15.4px">1</div>
<div class="pg" style="left:1216px;top:602px;width:10px">2</div>
<div class="pg" style="left:1233px;top:602px;width:10px">3</div>
<div class="pg" style="left:1251px;top:602px;width:10px">4</div>
<div class="pg" style="left:1268px;top:602px;width:10px">5</div>
<div class="pg" style="left:1285px;top:602px;width:10px">6</div>
<div class="pg" style="left:1302px;top:602px;width:10px">7</div>
<div class="pg" style="left:1320px;top:602px;width:10px">8</div>
<div class="pg" style="left:1337px;top:602px;width:10px">9</div>
<svg class="abs" style="left:1356.5px;top:607px" width="7" height="10" viewBox="0 0 7 10" fill="none" stroke="#595959" stroke-width="1"><path d="M1.5 1L5.5 5 1.5 9"/></svg>
<div class="pg" style="left:1370px;width:62px;border:1px solid #d9d9d9;border-radius:2px;line-height:15px;text-align:left;padding-left:5px">10 条/页<svg class="abs" style="left:46px;top:5px" width="8" height="6" viewBox="0 0 8 6" fill="none" stroke="#bfbfbf" stroke-width="0.9"><path d="M0.8 1L4 4.5 7.2 1"/></svg></div>
<div class="pg" style="left:1437px">跳至</div>
<div class="pg" style="left:1463px;width:31px;border:1px solid #d9d9d9;border-radius:2px"></div>
<div class="pg" style="left:1500px">页</div>
<div id="status">qt-dlyh-sjgl.local.huiminbangfu.top:8007/pm/pmRouteDetectionList</div>
</body></html>
